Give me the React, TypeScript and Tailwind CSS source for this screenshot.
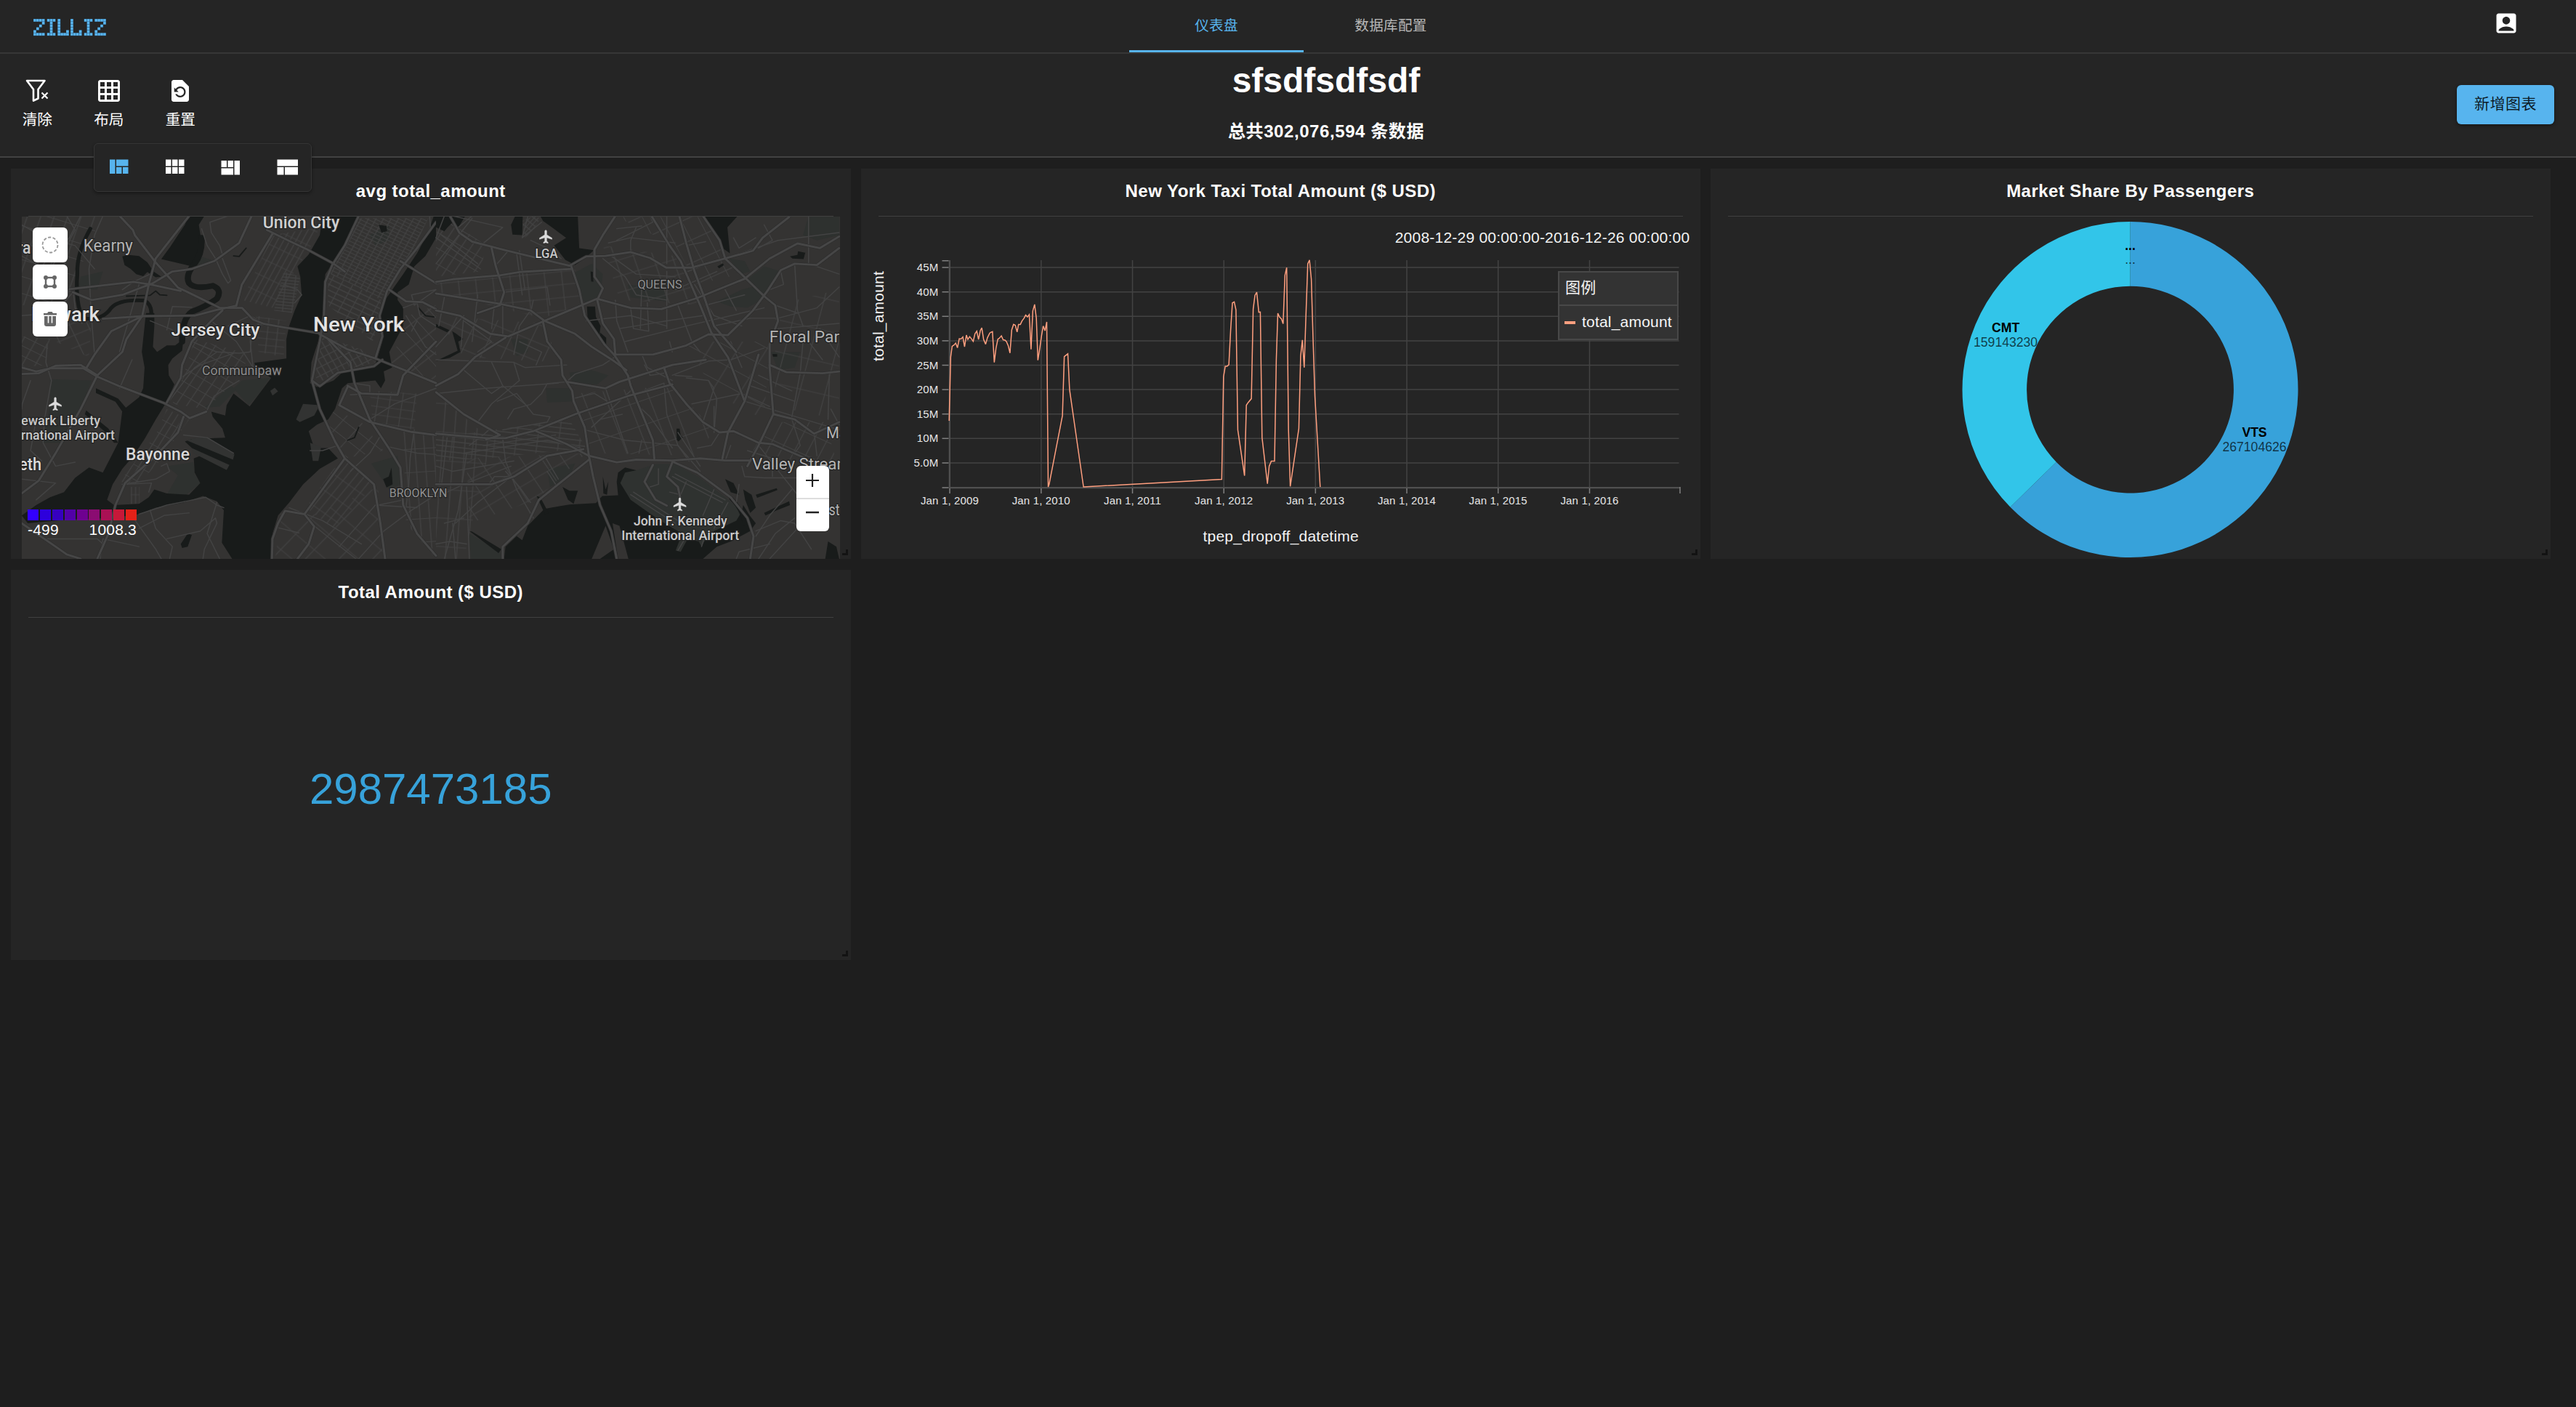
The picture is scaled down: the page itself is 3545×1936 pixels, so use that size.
import React from "react";
import { MdAccountBox, MdGridOn, MdRestorePage } from "react-icons/md";

const GLYPHS: Record<string, string[]> = {
  Z: ["####", "...#", "..#.", ".#..", "#...", "####"],
  I: ["###", ".#.", ".#.", ".#.", ".#.", "###"],
  L: ["#...", "#...", "#...", "#...", "#..#", "####"],
};
const LOGO: [string, number][] = [["Z", 0], ["I", 18.7], ["L", 33.3], ["L", 51], ["I", 69.7], ["Z", 84.3]];

function Logo() {
  return (
    <svg width="100" height="24" viewBox="0 0 100 24" aria-label="ZILLIZ">
      {LOGO.map(([ch, x], i) =>
        GLYPHS[ch].map((row, r) =>
          row.split("").map((c, k) =>
            c === "#" ? (
              <g key={`${i}-${r}-${k}`}>
                <rect x={x + k * 3.9} y={r * 3.85} width="4" height="4" fill="#2f6287" />
                <rect x={x + k * 3.9 + 0.2} y={r * 3.85 + 0.2} width="3.4" height="3.4" fill="#5ab6f0" />
              </g>
            ) : null
          )
        )
      )}
    </svg>
  );
}

function ClearFilterIcon() {
  return (
    <svg width="32" height="32" viewBox="0 0 32 32" fill="none" stroke="#fff">
      <path d="M2 2h24.500l-9 12v12.500l-6.500 3.200V14z" strokeWidth="2.600" strokeLinejoin="round" />
      <path d="M22.500 18.500l8 8M30.500 18.500l-8 8" strokeWidth="2.200" />
    </svg>
  );
}

function Tool({ icon, label }: { icon: React.ReactNode; label: string }) {
  return (
    <div className="flex w-[98.500px] flex-col items-center">
      <div className="flex h-9 items-center justify-center">{icon}</div>
      <div className="mt-[6px] text-[20.600px] leading-[32px] text-white">{label}</div>
    </div>
  );
}

function Handle() {
  return <span className="absolute right-1 bottom-[5px] h-2 w-2 border-r-[3px] border-b-[3px] border-[#131313]" />;
}

function Card({ title, children }: { title: string; children: React.ReactNode }) {
  return (
    <section className="relative flex h-[537px] flex-col bg-[#252525]">
      <h3 className="flex h-[65px] items-center justify-center pb-[3px] text-[24px] font-bold tracking-[0.45px] text-white">{title}</h3>
      <div className="mx-6 h-px shrink-0 bg-[#404040]" />
      {children}
      <Handle />
    </section>
  );
}

/* ---------- map ---------- */

const waterWest = [
  "678,216 735,216 715,250 727,330 712,400 690,410 580,382 612,335 640,290 665,250",
  "440,372 462,366 500,370 530,395 552,430 580,450 560,452 530,432 515,448 490,440 470,420 448,405",
  "525,590 555,590 555,640 550,720 565,740 600,715 630,715 660,690 655,735 620,765 605,790 607,830 627,865 600,930 560,1000 520,1075 480,1140 440,1190 405,1250 385,1310 410,1330 500,1325 535,1300 555,1270 600,1285 680,1290 720,1245 700,1205 697,1150 720,1140 665,1085 690,1075 810,1070 800,1035 765,990 760,970 810,985 815,945 840,900 898,950 975,840 920,800 915,782 1030,765 1030,690 1040,640 1060,580 1085,520 1080,450 1070,410 1110,365 1150,290 1160,216 1290,216 1250,310 1195,400 1170,440 1165,500 1160,600 1150,680 1120,780 1115,860 1140,875 1200,850 1240,810 1350,790 1375,700 1370,600 1385,540 1450,440 1500,360 1540,280 1560,216 1568,216 1568,300 1530,370 1490,410 1470,480 1430,510 1430,540 1450,570 1450,640 1400,740 1410,800 1380,815 1385,850 1370,880 1350,850 1250,860 1230,880 1205,960 1180,1000 1140,1020 1110,1045 1130,1110 1180,1110 1215,1150 1150,1190 1090,1250 1040,1320 1000,1370 980,1440 975,1537 835,1537 798,1475 805,1350 780,1315 730,1295 660,1320 560,1340 500,1365 400,1380 250,1385 100,1400 78,1370 130,1330 180,1300 230,1280 270,1225 320,1185 370,1205 425,1090 440,965 500,915 515,880 520,800 510,740",
  "345,880 425,920 465,970 440,970 415,932 345,898",
  "310,965 390,1035 425,1090 410,1090 375,1045 305,980",
  "650,1480 675,1440 690,1445 675,1490 655,1495",
  "1378,1230 1398,1220 1408,1185 1412,1250 1390,1262",
  "1362,250 1390,255 1392,275 1372,280",
];
const landWest = [
  "1065,1000 1090,940 1150,945 1130,985 1078,1010",
  "972,890 988,878 1000,892 980,908",
  "670,1080 740,1065 843,1135 838,1155",
  "690,1110 825,1175 815,1195 695,1130",
  "1115,1090 1155,1105 1145,1160 1125,1160",
];
const parksWest = [
  "840,880 870,850 970,840 935,895 895,945 868,915",
  "600,1180 695,1165 700,1210 720,1245 670,1290 600,1290 640,1215",
  "180,845 330,850 300,930 230,1090 150,1090 180,950",
  "715,370 760,385 730,410 712,405",
  "1335,1170 1430,1140 1440,1250 1400,1270",
  "290,450 370,430 350,500 280,500",
  "1330,290 1400,250 1400,310 1350,330",
  "735,955 830,870 850,885 790,950",
];
const waterEast = [
  "0,216 105,216 80,262 60,240 40,262 30,275 0,260",
  "285,216 312,216 310,290 275,288 270,250",
  "375,216 510,216 515,340 568,348 540,375 500,405 465,385 425,330 468,300 430,270 385,235",
  "543,565 572,565 575,605 592,640 588,675 565,650 545,610",
  "590,665 612,685 612,715 600,712 588,690",
  "965,216 1085,216 1048,260 1057,360 1028,338 1000,270",
  "1273,372 1300,366 1302,352 1328,358 1322,382 1282,380",
  "1012,410 1032,398 1035,406 1018,418",
  "556,430 565,432 566,470 558,468",
  "865,1035 876,1035 880,1062 888,1068 872,1085 866,1078",
  "1210,748 1227,748 1227,758 1212,758",
  "58,660 70,668 98,690 80,700 88,740 50,762 0,775 78,735",
  "0,632 48,656 40,664 0,644",
  "245,1537 250,1490 290,1450 310,1465 330,1410 390,1345 440,1335 480,1328 575,1322 598,1295 655,1292 650,1240 655,1205 680,1185 725,1197 860,1300 1050,1320 1098,1362 1105,1330 1128,1370 1150,1400 1130,1430 1060,1470 1010,1490 960,1537 692,1537 660,1410 635,1400 655,1537 590,1537 640,1500 610,1410 560,1537",
  "120,1430 130,1432 235,1500 225,1515",
  "455,1260 480,1275 510,1275 495,1325 475,1310",
  "362,1295 375,1300 405,1360 392,1365",
  "1105,1270 1135,1290 1150,1340 1130,1360 1112,1310",
  "1150,1290 1225,1265 1228,1272 1155,1302",
  "1180,1360 1220,1340 1270,1315 1273,1330 1225,1350 1185,1370",
  "600,1220 610,1270 620,1240 615,1290 602,1285",
  "1040,1230 1070,1245 1090,1290 1060,1280",
  "1410,1470 1440,1490 1450,1537 1400,1537",
];
const airfield = [
  "663,1245 680,1205 725,1195 790,1172 860,1172 950,1225 1040,1300 1080,1335 1094,1365 1080,1390 1000,1430 965,1470 955,1490 945,1470 905,1460 880,1510 862,1505 885,1440 800,1385 700,1310",
];
const parksEast = [
  "490,440 560,400 600,440 590,540 535,550 510,500",
  "1100,500 1170,480 1170,540 1120,570 1060,565 1010,545",
  "1180,410 1240,430 1180,520 1120,460",
  "1205,740 1310,740 1290,800 1230,810",
  "480,820 560,810 620,830 580,865 490,860",
  "395,880 480,880 490,930 400,935",
  "690,480 820,500 830,545 700,530",
  "1340,216 1450,216 1450,290 1370,310 1320,290",
  "270,690 330,690 330,740 290,755",
  "1055,380 1110,390 1130,430 1095,440",
  "120,1440 230,1510 235,1537 125,1537",
  "400,1190 500,1170 480,1220 410,1260",
];
const majorWest = [
  "680,216 560,380 545,440 535,480 512,600 455,690 440,740 350,830 290,960 200,1130 140,1235 78,1285",
  "350,835 430,872 590,937 650,970 682,995 742,970",
  "78,800 130,815 180,803 300,803 350,835",
  "78,825 140,822 200,793 290,790 350,830",
  "430,216 478,270 485,290 560,395 640,492 680,512 790,570 870,570 910,615 950,632 1020,645 1150,668",
  "905,216 860,320 770,390 690,420 620,430 550,475 440,520 330,540 262,510",
  "250,498 400,480 480,470 540,480 650,505",
  "960,270 1040,312 1105,345 1200,400 1240,430",
  "980,285 870,480 850,562 780,578 700,600 512,602 370,612",
  "512,602 400,660 340,750 310,803",
  "1290,216 1240,330 1195,405 1170,470 1165,600 1150,700 1135,780 1122,850 1150,872 1215,820 1345,795 1375,770",
  "1122,850 1150,960 1205,1085 1240,1150 1345,1250 1368,1400 1385,1537",
  "1240,1150 1095,1365 1130,1412 1110,1480 1070,1537",
  "1095,1365 1025,1352 1000,1400 980,1460 978,1537",
  "1150,672 1250,730 1350,765 1455,810 1568,860",
  "1180,690 1260,780 1275,860 1330,1000 1395,1105 1440,1185 1450,1330 1500,1440 1568,1525",
  "1568,240 1500,340 1440,420 1392,505 1365,600 1375,680 1350,765",
  "1400,500 1460,545 1520,548 1568,575",
  "1440,390 1500,430 1568,475",
  "600,935 650,840 655,790 690,700 760,620 800,580",
  "660,990 640,1050 560,1140 450,1245 415,1330 390,1440 350,1537",
  "78,1400 200,1490 240,1520 290,1537",
  "1250,875 1220,945 1330,1010 1480,1048 1568,1060",
  "1250,870 1300,900 1430,905 1450,830 1568,700",
];
const minorWest = [
  "78,370 200,445",
  "540,440 480,470 440,500",
  "1545,216 1548,260 1500,350",
  "742,970 770,910 830,870 860,850",
  "240,216 270,270 240,330 180,420 120,480",
  "370,216 340,290 320,420 325,530",
  "78,250 160,300 270,330 340,420",
  "290,216 250,300 200,340 130,440",
  "265,520 270,570 295,630",
  "325,540 330,620 340,750",
  "78,600 200,590 262,510",
  "170,710 165,780 185,850 160,1000 155,1090 200,1180 270,1165",
  "78,1230 200,1245 130,1310",
  "110,850 80,940 78,960",
  "130,1000 110,1120 150,1160",
  "360,1537 370,1460 500,1490",
  "160,1460 350,1460 370,1480",
  "430,740 500,480",
  "475,770 430,880",
  "600,655 620,565 690,568",
  "540,620 620,655",
  "725,265 745,330 775,380 800,440 820,475 830,465 800,380",
  "820,216 755,240 760,280 790,330 800,365",
  "690,700 780,740 860,745 900,740 905,680",
  "760,620 850,700 910,800",
  "820,640 900,600 950,632",
  "910,800 900,700 905,650 945,632",
  "650,840 720,790 840,745",
  "600,940 700,800 780,740",
  "660,1060 745,1070 840,1130",
  "1020,480 1070,500 1085,520 1060,550",
  "580,1180 600,1170 610,1200 560,1230 440,1250",
  "440,1250 545,1245 535,1280",
  "500,1365 600,1330 740,1300 780,1330 805,1340",
  "480,1380 560,1500 580,1537",
  "500,1420 590,1370 680,1360",
  "540,1350 560,1420 620,1490 610,1537",
  "600,1460 720,1430 775,1380 780,1400 735,1500 730,1537",
  "780,1320 745,1440 790,1537",
  "1115,1120 1160,1120 1215,1100",
  "1130,1410 1200,1470 1280,1537",
  "1040,1340 1160,1390 1300,1480",
  "1000,1417 1075,1437",
  "1260,1200 1330,1130 1370,1060",
  "1290,1537 1380,1430 1480,1350 1568,1290",
  "1220,1490 1350,1330 1500,1340",
  "1360,1330 1450,1310",
  "1460,600 1530,720 1568,750",
  "1450,570 1500,550 1510,600 1568,640",
  "1568,500 1490,560 1480,520 1568,500",
  "1480,660 1500,620",
  "1330,1000 1420,940 1568,880",
  "1270,860 1330,870 1330,900 1260,905",
  "1395,1105 1500,1130 1568,1135",
  "1460,1340 1470,1250 1475,1150 1490,1040",
];
const majorEast = [
  "50,216 85,282 130,315 250,348 480,408 540,372 610,370 700,355 770,378 828,415 920,415 1040,380 1140,350 1175,300 1270,220",
  "0,470 60,460 230,445 300,432 490,420",
  "645,216 600,290 570,345 570,450 600,495 580,540 600,630 640,690 645,750",
  "485,405 515,500 535,600 605,710 640,750 690,830 700,870 780,1080 785,1150",
  "0,515 230,555 340,580 390,620 500,670 560,720 640,775 685,810",
  "775,216 840,330 880,390 950,560 990,665 1050,760 1110,930",
  "875,216 900,320 930,430 965,530 1000,640 1080,740",
  "0,580 85,600 195,670 260,680 390,620 580,535 700,570 810,575 940,532 1110,458 1200,380 1300,322 1380,340 1450,295",
  "640,750 780,750 900,715 980,672 1050,675 1140,580 1195,500 1240,425 1290,400 1370,405 1450,340",
  "960,216 1020,310 1040,380 1110,452 1180,525 1220,560 1230,620 1200,710 1200,800 1213,980 1160,1100 1120,1180",
  "0,895 100,980 230,1060 180,1078",
  "0,1055 180,1072 250,1072 350,1045 500,980 690,910 850,865",
  "360,1045 470,1095 550,1140 650,1165 720,1155 850,1158 950,1150 1040,1158 1130,1158",
  "550,1140 565,1220 590,1330 630,1430 650,1537",
  "240,1537 240,1490 330,1400 370,1310 550,1155",
  "850,1162 940,1205 1060,1300 1120,1380 1142,1450 1130,1537",
  "780,1175 750,1240 790,1310 830,1332",
  "850,1165 830,1220 870,1260 878,1300",
  "820,800 840,860 900,940 960,1010 1020,1050 1070,1045 1160,1090 1210,1095 1330,1150",
  "0,870 80,825 140,760 250,685",
  "385,625 400,700 450,770 455,830 490,890 495,930 535,1030 550,1140",
  "470,855 610,880 660,855 850,790 970,770",
  "1110,930 1160,750",
  "1110,930 1050,1050 1030,1150",
  "1200,790 1260,818 1390,822 1450,815",
  "1215,980 1290,1000 1360,1055 1450,1010",
  "0,1250 200,1250 280,1220 400,1140 530,1115",
  "200,340 215,410 245,510 230,560 150,590",
];
const minorEast = [
  "470,855 400,862 380,900 340,942 280,960 258,998",
  "470,855 500,825 600,790 650,755",
  "850,830 980,775 1060,770 1180,725",
  "1130,610 1230,610 1370,570 1450,490",
  "260,350 220,400",
  "645,540 650,620 690,740",
  "0,400 60,320 130,225", "30,216 0,300", "0,300 160,420", "20,290 150,400", "60,216 240,260 160,330", "130,216 80,260",
  "290,360 310,520", "300,350 320,500", "245,510 400,490 410,560", "0,720 100,600 90,720", "100,620 200,700 150,740",
  "210,560 200,650", "240,550 240,680", "150,520 130,700", "30,530 10,640", "340,580 300,640 280,750", "350,540 340,590",
  "640,216 770,216 780,240 650,310", "650,265 740,255", "620,320 700,300 860,320", "600,380 680,450 720,520 830,540",
  "630,370 720,440 860,450", "700,360 700,310 720,260", "830,216 830,400", "860,500 1010,430", "540,620 700,600 830,640",
  "700,570 710,650 765,660 760,550", "740,480 735,650", "830,430 830,650", "660,650 830,620 960,600", "680,700 900,640 1180,570",
  "740,750 760,800 850,850", "840,700 850,740", "920,700 950,740", "870,560 920,700", "930,480 1000,600 1100,640",
  "970,560 1110,520", "1040,500 1080,580", "1000,640 1130,610", "1060,700 1100,800", "900,330 970,315", "905,430 1000,390",
  "1040,380 1230,310 1450,280", "1340,216 1340,400 1450,440", "1180,250 1210,310 1160,340", "1150,300 1090,340 1070,300",
  "1240,430 1250,480 1200,500", "1290,400 1300,580 1320,640", "1220,560 1300,590", "1230,650 1450,630", "1320,700 1310,820 1280,990",
  "1340,700 1390,770", "1380,650 1450,760", "1415,816 1410,1000", "1110,930 1450,1040", "1130,870 1290,930", "1160,830 1280,890",
  "920,940 1100,900 1200,950", "900,840 980,850 1010,920 1000,1050", "980,850 1000,880 960,1010", "860,830 920,835",
  "750,790 770,830 830,820", "720,900 820,860 830,980 870,1100 910,1160", "730,950 770,990 850,1110", "610,880 690,1130",
  "700,890 560,1030", "490,920 570,900 630,940", "560,1030 590,1000 670,980", "535,1040 680,1080 870,1100 950,1200",
  "740,1080 730,1130", "940,1110 990,1100 1020,1050", "870,1050 950,1180", "1000,950 1000,1040", "1040,1160 1060,1100",
  "1120,1120 1210,1150 1210,1220", "1160,1100 1240,1210 1300,1290", "1280,1000 1310,1100 1290,1130", "1360,1050 1370,1140",
  "1420,960 1450,1020", "1100,1180 1110,1220 1180,1225 1300,1225", "1090,1250 1080,1320", "1150,1450 1200,1370 1280,1270",
  "1150,1430 1240,1390 1290,1400 1350,1500", "1160,1537 1220,1440 1290,1380", "1080,1537 1090,1510 1200,1480", "1200,1537 1300,1420",
  "0,770 280,780 320,800 470,790", "100,810 200,900 240,870", "200,780 240,870 330,950", "280,780 300,850 200,940 150,1010",
  "220,930 290,900 350,980 410,990 400,1010 240,1040", "300,700 380,740 360,790", "0,900 180,880 440,860",
  "110,1130 80,1350 30,1537", "240,1075 250,1160 290,1270 350,1380", "40,1070 20,1250", "120,1100 170,1060 190,1040",
  "0,1180 60,1200 280,1160", "100,1130 400,1080 520,1110", "170,1100 430,1060", "250,1200 300,1260 340,1320",
  "0,1300 100,1250 270,1180", "70,1400 150,1320 260,1230", "400,1200 430,1250", "0,1480 50,1470 110,1480", "60,1400 70,1537",
  "110,1260 120,1537", "30,1400 100,1380", "390,1140 440,1230", "190,1250 210,1220 280,1220",
  "330,220 310,300 380,240", "340,310 400,340 450,380", "700,1290 860,1400", "710,1280 870,1390", "850,1220 1030,1320",
  "860,1210 1040,1310", "1000,1270 960,1370", "900,1240 880,1290 840,1280", "1050,1320 1000,1420", "800,1190 800,1250 770,1260",
  "870,1505 895,1460", "955,1490 970,1440",
];

type Grid = { id: string; rot: number; w: number; h: number; poly: string };
const gridsWest: Grid[] = [
  { id: "midtown", rot: 27, w: 24, h: 13, poly: "1290,225 1540,225 1480,360 1400,490 1370,540 1180,430 1200,400" },
  { id: "chelsea", rot: 27, w: 38, h: 20, poly: "1180,430 1370,540 1365,620 1340,700 1180,560" },
  { id: "downtown", rot: 62, w: 30, h: 22, poly: "1160,680 1300,730 1350,780 1215,815 1145,860 1130,820" },
  { id: "hoboken", rot: 6, w: 34, h: 12, poly: "1020,430 1080,450 1050,590 985,580" },
  { id: "union", rot: 27, w: 20, h: 60, poly: "980,290 1150,260 1110,350 1060,430 980,570 870,540" },
  { id: "jersey", rot: 6, w: 36, h: 26, poly: "920,600 1030,620 1020,760 930,740" },
  { id: "jcsouth", rot: 32, w: 34, h: 44, poly: "700,690 900,750 850,850 740,960 620,940 660,830" },
  { id: "bayonne", rot: 30, w: 22, h: 50, poly: "600,960 680,1000 560,1180 490,1250 430,1240 560,1060" },
  { id: "newark", rot: 28, w: 42, h: 34, poly: "78,680 180,690 160,790 78,800" },
  { id: "newarkn", rot: 18, w: 46, h: 62, poly: "78,216 370,216 320,320 250,560 78,560" },
  { id: "harrison", rot: -24, w: 60, h: 44, poly: "180,560 330,600 320,760 200,700" },
  { id: "brooklyn", rot: 8, w: 44, h: 32, poly: "1330,890 1500,900 1490,1040 1340,1010" },
  { id: "sunset", rot: 37, w: 26, h: 70, poly: "1200,1190 1260,1160 1350,1250 1200,1420 1100,1340" },
  { id: "bensonhurst", rot: 42, w: 90, h: 80, poly: "1010,1360 1100,1380 1360,1260 1380,1537 990,1537" },
  { id: "flatbush", rot: -4, w: 34, h: 90, poly: "1450,1040 1568,1060 1568,1537 1460,1400" },
  { id: "park", rot: 40, w: 60, h: 50, poly: "1160,940 1300,1010 1380,1120 1240,1150 1180,1040" },
  { id: "kill", rot: 0, w: 15, h: 60, poly: "470,1260 502,1260 502,1325 470,1325" },
  { id: "wburg", rot: 50, w: 70, h: 60, poly: "1470,600 1568,560 1568,850 1400,790" },
];
const gridsEast: Grid[] = [
  { id: "astoria", rot: 32, w: 30, h: 52, poly: "0,280 60,240 180,330 160,430 0,450" },
  { id: "jackson", rot: -6, w: 62, h: 50, poly: "0,470 500,420 530,560 380,610 0,510" },
  { id: "lic", rot: 24, w: 70, h: 66, poly: "0,600 380,630 450,780 100,760" },
  { id: "flush", rot: -18, w: 66, h: 60, poly: "600,330 860,370 960,560 660,540" },
  { id: "flush2", rot: 64, w: 80, h: 60, poly: "650,220 960,220 1090,440 940,480 860,330" },
  { id: "jamaica", rot: -20, w: 74, h: 90, poly: "500,900 850,870 1000,1040 940,1140 560,1130" },
  { id: "bushwick", rot: 7, w: 76, h: 20, poly: "0,1070 480,1000 540,1110 180,1150 0,1160" },
  { id: "enyork", rot: -32, w: 64, h: 60, poly: "110,1150 540,1130 360,1310 120,1400" },
  { id: "canarsie", rot: 4, w: 40, h: 110, poly: "0,900 200,1080 100,1537 0,1537" },
  { id: "hollis", rot: 30, w: 90, h: 66, poly: "900,700 1200,700 1180,1000 1000,900" },
  { id: "east", rot: 14, w: 90, h: 120, poly: "1220,560 1450,500 1450,1000 1220,950" },
  { id: "valley", rot: 26, w: 44, h: 80, poly: "1200,1010 1400,1010 1450,1200 1140,1120" },
  { id: "apron", rot: 40, w: 12, h: 22, poly: "310,235 350,216 375,225 350,270 320,300" },
];

const pts = (s: string) => "M" + s.split(" ").join("L");

function Half({ x, water, land, landFill, parks, grids, minor, major, children }: { x: number; water: string[]; land: string[]; landFill: string; parks: string[]; grids: Grid[]; minor: string[]; major: string[]; children?: React.ReactNode }) {
  return (
    <g transform={`translate(${x} 220) scale(0.38265 0.35714)`} strokeLinejoin="round" strokeLinecap="round">
      <defs>
        {grids.map((g) => (
          <pattern key={g.id} id={g.id} width={g.w} height={g.h} patternUnits="userSpaceOnUse" patternTransform={`rotate(${g.rot})`}>
            <path d={`M0 ${g.h / 2}H${g.w}M${g.w / 2} 0V${g.h}`} stroke="#424242" strokeWidth="3.200" fill="none" />
          </pattern>
        ))}
      </defs>
      {parks.map((p) => <polygon key={p} points={p} fill="#2e312f" />)}
      {grids.map((g) => <polygon key={g.id} points={g.poly} fill={`url(#${g.id})`} />)}
      {water.map((p) => <polygon key={p} points={p} fill="#181b1a" />)}
      {land.map((p) => <polygon key={p} points={p} fill={landFill} />)}
      {children}
      <g fill="none" stroke="#434343" strokeWidth="4">
        {minor.map((p) => <path key={p} d={pts(p)} />)}
      </g>
      <g fill="none" stroke="#2d2d2d" strokeWidth="11.500">
        {major.map((p) => <path key={p} d={pts(p)} />)}
      </g>
      <g fill="none" stroke="#464646" strokeWidth="8">
        {major.map((p) => <path key={p} d={pts(p)} />)}
      </g>
    </g>
  );
}

type Label = [string, number, number, number, number, string, number];
const labels: Label[] = [
  ["New York", 431, 455.500, 125.500, 28, "#e4e4e4", 500],
  ["Jersey City", 235.400, 462, 122, 24, "#dedede", 500],
  ["Union City", 361.700, 313.500, 105.500, 24, "#cfcfcf", 500],
  ["Kearny", 114.800, 346, 68, 23, "#b4b4b4", 400],
  ["Newark", 43, 441.500, 94, 27, "#e0e0e0", 500],
  ["ra", 24, 349, 18.500, 23, "#c8c8c8", 500],
  ["Communipaw", 278, 516, 109.500, 19, "#8c8c8c", 400],
  ["ewark Liberty", 29, 585, 109, 18, "#c8c8c8", 500],
  ["rnational Airport", 29, 605, 129, 18, "#c8c8c8", 500],
  ["Bayonne", 173, 633, 88, 24, "#d8d8d8", 500],
  ["eth", 26, 647, 31, 24, "#dcdcdc", 500],
  ["BROOKLYN", 535.800, 683.500, 79.500, 17, "#929292", 400],
  ["LGA", 736.600, 355, 31, 18, "#c8c8c8", 500],
  ["QUEENS", 877.500, 397, 61, 17, "#929292", 400],
  ["Floral Park", 1058.800, 471, 108, 22, "#b4b4b4", 400],
  ["Ma", 1137, 603, 29, 22, "#b4b4b4", 400],
  ["Valley Stream", 1035, 645.500, 136, 22, "#b4b4b4", 400],
  ["st", 1140.500, 708.500, 15, 22, "#b4b4b4", 400],
  ["John F. Kennedy", 872, 723, 128.600, 18, "#cccccc", 500],
  ["International Airport", 855.300, 743, 162, 18, "#cccccc", 500],
];
const planes: [number, number][] = [[76.500, 555.700], [751.500, 325.700], [936, 694]];
const scale = ["#3300ff", "#2d00dc", "#3600bf", "#5200a8", "#6e0090", "#8b0c72", "#a91154", "#c71839", "#e42118"];

function MapView() {
  return (
    <div className="relative mx-[15px] h-[471px] overflow-hidden bg-[#343332]">
      <svg className="block" width="1125.500" height="471" viewBox="30 298 1125.500 471">
        <rect x="30" y="298" width="1126" height="471" fill="#343332" />
        <Half x={0} water={waterWest} land={landWest} landFill="#323332" parks={parksWest} grids={gridsWest} minor={minorWest} major={majorWest}>
          <g fill="none" stroke="#181b1a">
            <path d="M725 300Q728 360 700 400Q665 445 680 475Q700 500 765 485Q800 500 780 535Q740 565 690 585Q655 610 655 700" strokeWidth="22" />
            <path d="M325 265Q275 360 278 440Q270 560 300 610Q370 620 400 570Q430 535 520 542Q552 560 542 620" strokeWidth="14" />
            <path d="M455 525L540 522L560 505L575 520L600 522M840 370L860 372L885 340M1250 1080L1275 1070L1290 1030M1505 570L1530 600L1560 605" strokeWidth="5" />
          </g>
        </Half>
        <Half x={600} water={waterEast} land={airfield} landFill="#2f3230" parks={parksEast} grids={gridsEast} minor={minorEast} major={majorEast}>
          <path d="M1062 1305Q1100 1345 1110 1400" fill="none" stroke="#181b1a" strokeWidth="14" />
        </Half>
        {planes.map(([x, y]) => (
          <path key={x} transform={`translate(${x - 10.8} ${y - 10.8}) scale(0.9)`} fill="#dcdcdc" stroke="#dcdcdc" strokeWidth="0.500"
            d="M21 16v-2l-8-5V3.500c0-.83-.67-1.500-1.500-1.500S10 2.670 10 3.500V9l-8 5v2l8-2.500V19l-2 1.500V22l3.500-1 3.500 1v-1.500L13 19v-5.500l8 2.500z" />
        ))}
        {labels.map(([t, x, y, len, size, fill, weight]) => (
          <text key={t + x} x={x} y={y} textLength={len} lengthAdjust="spacingAndGlyphs" fontSize={size} fontWeight={weight} fill={fill} stroke="#232323" strokeWidth="2.500" paintOrder="stroke" fontFamily="Roboto, sans-serif">{t}</text>
        ))}
      </svg>
      <div className="absolute top-[15px] left-[15px] flex flex-col gap-[3px]">
        <div className="flex h-12 w-12 items-center justify-center rounded-md bg-white">
          <svg width="26" height="26" viewBox="0 0 26 26"><circle cx="13" cy="13" r="10.500" fill="none" stroke="#999" strokeWidth="1.800" strokeDasharray="4.200 2.400" /></svg>
        </div>
        <div className="flex h-12 w-12 items-center justify-center rounded-md bg-white">
          <svg width="20" height="20" viewBox="0 0 20 20" fill="#666">
            <rect x="4" y="4" width="12" height="12" fill="none" stroke="#666" strokeWidth="2.400" />
            <circle cx="4" cy="4" r="3" /><circle cx="16" cy="4" r="3" /><circle cx="4" cy="16" r="3" /><circle cx="16" cy="16" r="3" />
          </svg>
        </div>
        <div className="flex h-12 w-12 items-center justify-center rounded-md bg-white">
          <svg width="20" height="22" viewBox="0 0 20 22">
            <path d="M1 3h5l1.500-2h5L14 3h5v2.500H1z" fill="#666" />
            <path d="M2 7h16V18a3 3 0 0 1-3 3H5a3 3 0 0 1-3-3z" fill="#666" />
            <path d="M7.500 7v9.500M12.500 7v9.500" stroke="#fff" strokeWidth="1.600" />
          </svg>
        </div>
      </div>
      <div className="absolute bottom-8 left-2 w-[150px]">
        <div className="flex justify-between">
          {scale.map((c) => <span key={c} className="h-[15px] w-[15px]" style={{ background: c }} />)}
        </div>
        <div className="flex h-[21px] items-end justify-between pt-[2px] text-[21px] leading-[25px] tracking-[0.2px] text-white">
          <span className="-mb-1">-499</span>
          <span className="-mb-1">1008.3</span>
        </div>
      </div>
      <div className="absolute top-[343px] right-[15px] flex h-[90px] w-[45px] flex-col overflow-hidden rounded-md bg-white">
        <div className="flex h-[46px] items-center justify-center border-b-[2px] border-[#ddd] pb-1">
          <svg width="18" height="18" viewBox="0 0 18 18" stroke="#222" strokeWidth="2.200"><path d="M0 9h18M9 0v18" /></svg>
        </div>
        <div className="flex h-11 items-center justify-center pb-2">
          <svg width="18" height="18" viewBox="0 0 18 18" stroke="#222" strokeWidth="2.400"><path d="M0 9h18" /></svg>
        </div>
      </div>
    </div>
  );
}

/* ---------- line chart ---------- */

const series =
  "308,1005 313,760 318,718 324,714 330,706 336,724 342,689 348,690 354,682 360,720 366,675 371,692 377,681 383,689 389,699 395,670 401,660 407,692 413,658 418,647 424,692 431,710 437,685 445,667 449,664 454,662 460,780 466,725 472,691 478,686 484,678 490,693 496,694 501,700 507,715 513,744 519,655 525,634 531,637 537,663 542,634 548,634 554,620 560,611 566,598 572,605 578,596 584,730 590,582 596,557 602,610 607,772 613,730 619,680 625,640 631,658 637,624 642,1260 645,1250 690,985 696,758 708,747 714,885 761,1260 1227,1231 1233,835 1239,795 1245,795 1251,789 1257,655 1263,551 1269,547 1275,578 1281,1040 1304,1217 1310,945 1316,935 1327,920 1333,575 1339,522 1345,510 1352,587 1357,586 1363,1070 1381,1248 1387,1180 1394,1161 1405,1161 1411,770 1416,591 1422,606 1428,612 1434,631 1440,445 1446,415 1452,1040 1458,1258 1487,1035 1493,755 1499,694 1505,800 1511,600 1517,400 1523,386 1529,460 1535,690 1541,910 1559,1260";
const yTicks: [string, number][] = [["45M", 368], ["40M", 401.700], ["35M", 435.300], ["30M", 468.900], ["25M", 502.500], ["20M", 536.100], ["15M", 569.700], ["10M", 603.300], ["5.0M", 637]];
const xTicks: [string, number][] = [["2009", 1306.500], ["2010", 1432.300], ["2011", 1558], ["2012", 1683.700], ["2013", 1809.800], ["2014", 1935.500], ["2015", 2061.200], ["2016", 2187]];

function LineChart() {
  const line = "M" + series.split(" ").map((p) => { const [a, b] = p.split(",").map(Number); return `${(1180 + a / 2.45).toFixed(1)} ${(220 + b / 2.8).toFixed(1)}`; }).join("L");
  return (
    <div className="relative h-[471px]">
      <svg className="block" width="1155.500" height="471" viewBox="1184.500 298 1155.500 471" fontFamily="'Liberation Sans', sans-serif">
        <g stroke="#434343" strokeWidth="1.500" fill="none">
          {yTicks.map(([t, y]) => <path key={t} d={`M1307 ${y}H2310`} />)}
          {xTicks.map(([t, x]) => <path key={t} d={`M${x} 358V671`} />)}
        </g>
        <path d="M1306.300 358V672M1306 671.200H2311.500" stroke="#505050" strokeWidth="2.200" fill="none" />
        <g stroke="#808080" strokeWidth="1.500" fill="none">
          {yTicks.map(([t, y]) => <path key={t} d={`M1296 ${y}H1305`} />)}
          {xTicks.map(([t, x]) => <path key={t} d={`M${x} 672V679`} />)}
          <path d="M1296 358.700H1305M1296 671H1305M2311.500 670V679" />
        </g>
        <path d={line} fill="none" stroke="#ff9f7f" strokeWidth="1.500" strokeLinejoin="miter" strokeMiterlimit="3" />
        <g fill="#e6e6e6" fontSize="15" letterSpacing="0.160">
          {yTicks.map(([t, y]) => <text key={t} x="1291" y={y + 5} textAnchor="end">{t}</text>)}
          {xTicks.map(([t, x]) => <text key={t} x={x} y="694" textAnchor="middle">{`Jan 1, ${t}`}</text>)}
        </g>
        <g fill="#f3f3f3" fontSize="21" letterSpacing="0.220">
          <text x="2324.800" y="333.800" textAnchor="end">2008-12-29 00:00:00-2016-12-26 00:00:00</text>
          <text x="1762.200" y="744.500" textAnchor="middle">tpep_dropoff_datetime</text>
          <text transform="translate(1215.500 435) rotate(-90)" textAnchor="middle">total_amount</text>
        </g>
      </svg>
      <div className="absolute top-[75px] right-[30px] w-[166px] border-2 border-[#484848] bg-[#333] text-[21px] tracking-[0.2px] text-[#f5f5f5]">
        <div className="flex h-[46px] items-center border-b-2 border-[#484848] pb-[3px] pl-2">图例</div>
        <div className="flex h-[45px] items-center pb-[2px] pl-[7px]">
          <span className="mt-[3px] mr-[9px] h-1 w-[15px] bg-[#ff9f7f]" />
          total_amount
        </div>
      </div>
    </div>
  );
}

/* ---------- donut ---------- */

function Donut() {
  const cx = 2931, cy = 536.1, R = 231, r = 142.4;
  const a = 2 * Math.PI * (267104626 / (267104626 + 159143230));
  const at = (rad: number, ang: number) => `${cx + rad * Math.sin(ang)} ${cy - rad * Math.cos(ang)}`;
  return (
    <svg className="block" width="1155.500" height="471" viewBox="2353.500 298 1155.500 471" fontFamily="'Liberation Sans', sans-serif" fontSize="17.600" textAnchor="middle">
      <path d={`M${at(R, 0)}A${R} ${R} 0 1 1 ${at(R, a)}L${at(r, a)}A${r} ${r} 0 1 0 ${at(r, 0)}Z`} fill="#37a2da" />
      <path d={`M${at(R, a)}A${R} ${R} 0 0 1 ${at(R, 0)}L${at(r, 0)}A${r} ${r} 0 0 0 ${at(r, a)}Z`} fill="#32c5e9" />
      <g fontWeight="700" fill="#000">
        <text x="2759.600" y="457">CMT</text>
        <text x="3102" y="601">VTS</text>
        <text x="2931" y="344">...</text>
      </g>
      <g fill="#000" fillOpacity="0.700">
        <text x="2759.600" y="477">159143230</text>
        <text x="3102" y="621">267104626</text>
        <text x="2931" y="363">...</text>
      </g>
    </svg>
  );
}

function LayoutMenu() {
  const quilt = "M10 18h5v-6h-5v6zm-6 0h5V5H4v13zm12 0h5v-6h-5v6zM10 5v6h11V5H10z";
  return (
    <div className="absolute top-[123px] left-[129px] z-10 flex h-[67px] w-[300px] items-center rounded-md border border-[#353535] bg-[#252525] pl-[15px] shadow-[0_2px_4px_rgba(0,0,0,0.4)]">
      <svg className="mb-[1px] h-9 w-9" viewBox="0 0 24 24" fill="#57b4ee"><path d={quilt} /></svg>
      <svg className="mb-[1px] ml-[41px] h-9 w-9" viewBox="0 0 24 24" fill="#fff"><path d="M4 11h5V5H4v6zm0 7h5v-6H4v6zm6 0h5v-6h-5v6zm6 0h5v-6h-5v6zm-6-7h5V5h-5v6zm6-6v6h5V5h-5z" /></svg>
      <svg className="mb-[1px] ml-[42px] h-9 w-9 rotate-180" viewBox="0 0 24 24" fill="#fff"><path d={quilt} /></svg>
      <svg className="mb-[1px] ml-[41px] h-9 w-9" viewBox="0 0 24 24" fill="#fff"><path d="M3 19h6v-7H3v7zm7 0h12v-7H10v7zM3 5v6h19V5H3z" /></svg>
    </div>
  );
}

export default function App() {
  return (
    <div className="h-[1936px] w-[3545px] overflow-hidden bg-[#1e1e1e] font-['Liberation_Sans','Noto_Sans_CJK_SC',sans-serif] text-white">
      <header className="flex h-[74px] justify-between border-b-2 border-[#363636] bg-[#252525] pr-[78px] pl-[46px]">
        <div className="w-[100px] pt-[26px]"><Logo /></div>
        <nav className="flex text-[19.500px] tracking-[0.4px]">
          <div className="ml-[11px] flex w-[240px] items-center justify-center border-b-[3px] border-[#57b4ee] pt-[2px] text-[#57b4ee]">仪表盘</div>
          <div className="flex w-[240px] items-center justify-center border-b-[3px] border-transparent pt-[2px] text-[#b8b8b8]">数据库配置</div>
        </nav>
        <MdAccountBox className="mt-[14px] h-9 w-9" />
      </header>
      <div className="relative flex h-[143px] items-start justify-between border-b-2 border-[#424242] bg-[#252525] pr-[30px] pl-[2px]">
        <div className="flex w-[300px] pt-[33px]">
          <Tool icon={<ClearFilterIcon />} label="清除" />
          <Tool icon={<MdGridOn className="h-9 w-9" />} label="布局" />
          <Tool icon={<MdRestorePage className="h-9 w-9" />} label="重置" />
        </div>
        <div className="mr-[33px] flex flex-col items-center">
          <h1 className="mt-[9px] text-[48px] leading-[55px] font-bold">sfsdfsdfsdf</h1>
          <div className="mt-[26px] text-[24px] leading-[34px] font-bold tracking-[0.58px]">总共302,076,594 条数据</div>
        </div>
        <div className="mt-[43px] flex h-[54px] w-[134px] items-center justify-center rounded-md bg-[#57b4ee] pb-[3px] text-[21px] tracking-[0.5px] text-black/87 shadow-[0_2px_5px_rgba(0,0,0,0.4)]">新增图表</div>
        <LayoutMenu />
      </div>
      <main className="grid grid-cols-[1155.5px_1155.5px_1155.5px] gap-x-[14px] gap-y-[15px] p-[15px]">
        <Card title="avg total_amount"><MapView /></Card>
        <Card title="New York Taxi Total Amount ($ USD)"><LineChart /></Card>
        <Card title="Market Share By Passengers"><Donut /></Card>
        <Card title="Total Amount ($ USD)">
          <div className="flex flex-1 items-center justify-center text-[60px] text-[#37a2da]">2987473185</div>
        </Card>
      </main>
    </div>
  );
}
